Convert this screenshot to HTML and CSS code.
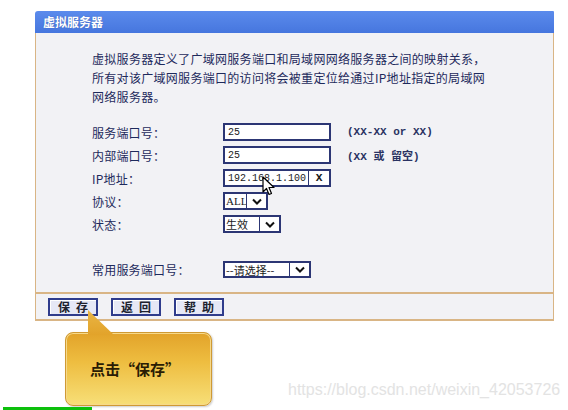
FILE: index.html
```html
<!DOCTYPE html>
<html lang="zh-CN">
<head>
  <meta charset="UTF-8" />
  <title>虚拟服务器</title>
  <link rel="stylesheet" href="styles.css">
</head>
<body>
  <div class="panel">
    <div class="panel-title">虚拟服务器</div>
    <div class="panel-body">
      <p class="intro">虚拟服务器定义了广域网服务端口和局域网网络服务器之间的映射关系，<br>所有对该广域网服务端口的访问将会被重定位给通过IP地址指定的局域网<br>网络服务器。</p>

      <div class="form">
        <span class="label">服务端口号：</span>
        <div class="field"><span class="value">25</span></div>
        <span class="hint">(XX-XX or XX)</span>

        <span class="label">内部端口号：</span>
        <div class="field"><span class="value">25</span></div>
        <span class="hint">(XX 或 留空)</span>

        <span class="label">IP地址：</span>
        <div class="field"><span class="value">192.168.1.100</span><span class="clear">x</span></div>
        <span></span>

        <span class="label">协议：</span>
        <div class="select select-proto"><span class="value">ALL</span><span class="arrow"><svg width="10" height="7" viewBox="0 0 10 7"><path d="M1 1.5 L5 5.5 L9 1.5" fill="none" stroke="#111" stroke-width="2"/></svg></span></div>
        <span></span>

        <span class="label">状态：</span>
        <div class="select select-state"><span class="value">生效</span><span class="arrow"><svg width="10" height="7" viewBox="0 0 10 7"><path d="M1 1.5 L5 5.5 L9 1.5" fill="none" stroke="#111" stroke-width="2"/></svg></span></div>
        <span></span>
      </div>

      <div class="form common">
        <span class="label">常用服务端口号：</span>
        <div class="select select-common"><span class="value">--请选择--</span><span class="arrow"><svg width="10" height="7" viewBox="0 0 10 7"><path d="M1 1.5 L5 5.5 L9 1.5" fill="none" stroke="#111" stroke-width="2"/></svg></span></div>
        <span></span>
      </div>
    </div>
    <div class="panel-actions">
      <button class="btn">保存</button>
      <button class="btn">返回</button>
      <button class="btn">帮助</button>
    </div>
  </div>

  <svg class="mouse" width="13" height="21" viewBox="0 0 13 21">
    <path d="M1 1 L1 16 L4.5 12.5 L7 18.5 L9.5 17.5 L7 11.5 L12 11.5 Z" fill="#fff" stroke="#000" stroke-width="1.2" stroke-linejoin="round"/>
  </svg>

  <div class="callout">点击“保存”</div>
  <div class="watermark">https://blog.csdn.net/weixin_42053726</div>
  <div class="progress"></div>
</body>
</html>
```

FILE: styles.css
```css
body {
  margin: 0;
  background: #fff;
  font-family: "Noto Sans CJK SC", "Noto Sans", sans-serif;
  color: #1e2a5c;
}

.panel {
  margin: 11px 0 0 35px;
  width: 519px;
}

.panel-title {
  height: 22px;
  line-height: 22px;
  padding-left: 8px;
  background: linear-gradient(#5b8bec, #4676de);
  border-radius: 3px 1px 0 0;
  color: #fff;
  font-size: 12px;
  font-weight: bold;
  text-shadow: 0 0 1px #2a4fa8;
}

.panel-body {
  background: #f2f2f5;
  border-left: 1px solid #d9b585;
  border-right: 1px solid #d9b585;
  padding: 16px 0 14px 56px;
}

.intro {
  margin: 0;
  font-size: 12px;
  letter-spacing: 0.3px;
  line-height: 19px;
}

.form {
  display: grid;
  grid-template-columns: 115px auto 1fr;
  grid-auto-rows: 18px;
  row-gap: 5px;
  column-gap: 16px;
  align-items: center;
  margin-top: 17px;
  font-size: 12px;
}

.form.common {
  margin-top: 28px;
  grid-auto-rows: 17px;
}

.label {
  letter-spacing: 0.2px;
}

.field, .select {
  box-sizing: border-box;
  height: 100%;
  display: flex;
  align-items: center;
  background: #fff;
  border: 2px solid #2c3674;
  color: #1a1a1a;
}

.field {
  width: 108px;
}

.value {
  flex: 1;
  padding-left: 3px;
  font-family: "Liberation Mono", "Noto Sans CJK SC", monospace;
  font-size: 10px;
  white-space: nowrap;
  overflow: hidden;
}

.clear {
  width: 20px;
  height: 100%;
  border-left: 1px solid #2c3674;
  display: flex;
  align-items: center;
  justify-content: center;
  font-family: "Liberation Mono", monospace;
  font-size: 12px;
  font-weight: bold;
}

.select .value {
  padding-left: 1px;
  font-family: "Noto Sans CJK SC", sans-serif;
  font-size: 11px;
}

.select-proto {
  width: 45px;
}

.select-proto .value {
  font-family: "Liberation Serif", serif;
}

.select-state {
  width: 58px;
}

.select-common {
  width: 88px;
}

.arrow {
  width: 19px;
  height: 100%;
  border-left: 1px solid #2c3674;
  display: flex;
  align-items: center;
  justify-content: center;
}

.hint {
  font-family: "Liberation Mono", "Noto Sans CJK SC", monospace;
  font-size: 11px;
  font-weight: bold;
  color: #2a3262;
}

.panel-actions {
  display: flex;
  gap: 13px;
  padding: 4px 12px 3px;
  background: #f2f2f5;
  border: 1px solid #d9b585;
  border-width: 2px 1px 2px;
}

.btn {
  width: 50px;
  height: 18px;
  padding: 0 0 0 6px;
  background: #e6e8f6;
  border: 2px solid #2f3c8c;
  box-shadow: inset 1px 1px 0 #fff;
  font-family: "Noto Sans CJK SC", sans-serif;
  font-size: 12px;
  font-weight: bold;
  letter-spacing: 6px;
  line-height: 14px;
  color: #20222e;
}

.mouse {
  position: absolute;
  left: 262px;
  top: 176px;
}

.callout {
  position: absolute;
  left: 65px;
  top: 332px;
  box-sizing: border-box;
  width: 147px;
  height: 74px;
  padding-left: 24px;
  line-height: 72px;
  border: 1px solid #cf9a34;
  border-radius: 8px;
  background: linear-gradient(#e2a32a, #eebd40 40%, #f7df78);
  box-shadow: inset 0 0 0 1px #f6d98a, 1px 1px 2px rgba(0, 0, 0, 0.2);
  font-size: 15px;
  font-weight: bold;
  color: #2a1c04;
}

.callout::before {
  content: "";
  position: absolute;
  left: 22px;
  top: -23px;
  width: 26px;
  height: 25px;
  background: linear-gradient(#e9b545, #e2a32a);
  clip-path: polygon(0 0, 0 100%, 100% 100%);
}

.watermark {
  position: absolute;
  left: 288px;
  top: 381px;
  font-family: "Liberation Sans", sans-serif;
  font-size: 16px;
  color: #e3e3e3;
}

.progress {
  position: absolute;
  left: 3px;
  top: 407px;
  width: 89px;
  height: 3px;
  background: #0cc00c;
}
```
